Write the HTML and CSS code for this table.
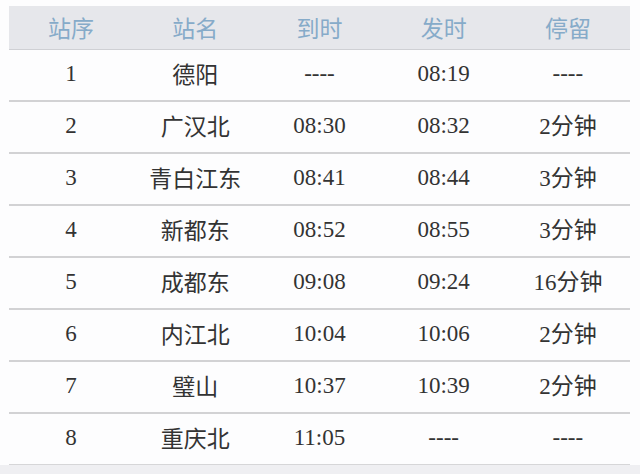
FILE: index.html
```html
<!DOCTYPE html>
<html lang="zh">
<head>
<meta charset="utf-8">
<link rel="stylesheet" href="styles.css">
</head>
<body>
<div class="page">
<table class="timetable">
  <thead>
    <tr><th>站序</th><th>站名</th><th>到时</th><th>发时</th><th>停留</th></tr>
  </thead>
  <tbody>
    <tr><td class="num">1</td><td class="cn">德阳</td><td class="num">----</td><td class="num">08:19</td><td class="num">----</td></tr>
    <tr><td class="num">2</td><td class="cn">广汉北</td><td class="num">08:30</td><td class="num">08:32</td><td class="num">2<span class="cn">分钟</span></td></tr>
    <tr><td class="num">3</td><td class="cn">青白江东</td><td class="num">08:41</td><td class="num">08:44</td><td class="num">3<span class="cn">分钟</span></td></tr>
    <tr><td class="num">4</td><td class="cn">新都东</td><td class="num">08:52</td><td class="num">08:55</td><td class="num">3<span class="cn">分钟</span></td></tr>
    <tr><td class="num">5</td><td class="cn">成都东</td><td class="num">09:08</td><td class="num">09:24</td><td class="num">16<span class="cn">分钟</span></td></tr>
    <tr><td class="num">6</td><td class="cn">内江北</td><td class="num">10:04</td><td class="num">10:06</td><td class="num">2<span class="cn">分钟</span></td></tr>
    <tr><td class="num">7</td><td class="cn">璧山</td><td class="num">10:37</td><td class="num">10:39</td><td class="num">2<span class="cn">分钟</span></td></tr>
    <tr><td class="num">8</td><td class="cn">重庆北</td><td class="num">11:05</td><td class="num">----</td><td class="num">----</td></tr>
  </tbody>
</table>
<div class="footer"></div>
</div>
</body>
</html>
```

FILE: styles.css
```css
html, body {
  margin: 0;
  padding: 0;
  background: #fdfdfe;
}
.page {
  width: 640px;
  height: 474px;
  padding-top: 6px;
  box-sizing: border-box;
  display: flex;
  flex-direction: column;
}
.timetable {
  margin-left: 9px;
  width: 621px;
  border-collapse: collapse;
  table-layout: fixed;
}
.timetable th {
  height: 43px;
  padding: 0;
  background: #e6e7eb;
  border-bottom: 1px solid #cfd0d4;
  color: #86abc9;
  font-family: "Noto Sans CJK SC", "Noto Sans", sans-serif;
  font-weight: 400;
  font-size: 23px;
  line-height: 1;
  text-align: center;
}
.timetable td {
  height: 47px;
  padding: 0 0 3px;
  border-bottom: 2px solid #d2d2d4;
  color: #333;
  font-size: 23px;
  line-height: 1;
  text-align: center;
}
.num {
  font-family: "Liberation Serif", "Noto Sans CJK SC", serif;
  font-size: 25px;
}
.cn {
  font-family: "Noto Sans CJK SC", "Noto Sans", sans-serif;
  font-size: 23px;
}
.timetable tbody tr:last-child td {
  border-bottom: 1px solid #d6d6d8;
}
.footer {
  flex: 1;
  background: #efeff2;
}
```
